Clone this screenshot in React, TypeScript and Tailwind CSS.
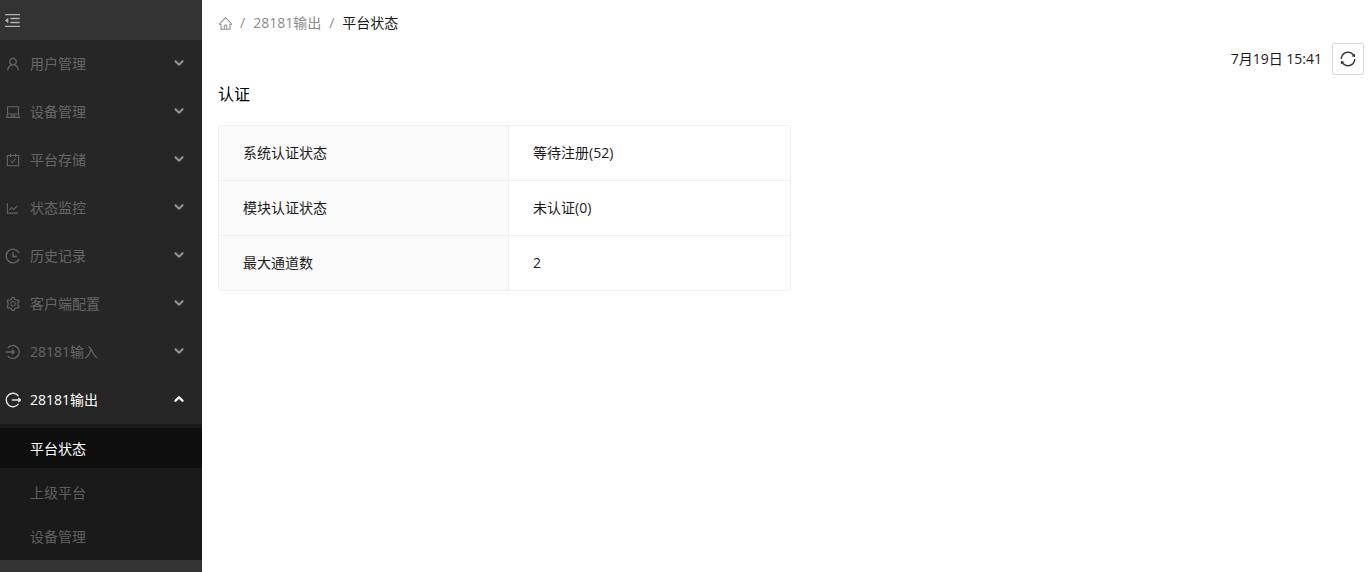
import React from "react";
import {
  AiOutlineCarryOut,
  AiOutlineHome,
  AiOutlineLaptop,
  AiOutlineLineChart,
  AiOutlineMenuFold,
  AiOutlineSetting,
  AiOutlineSync,
  AiOutlineUser,
} from "react-icons/ai";
import { ChevronDown, ChevronUp } from "lucide-react";

const FONT = "font-['Open_Sans','Noto_Sans_CJK_SC',sans-serif]";

const LoginIcon = () => (
  <svg viewBox="0 0 14 14" className="h-[16px] w-[16px]" fill="none" stroke="currentColor" strokeWidth="1.1">
    <path d="M2.2 3.6A5.7 5.7 0 1 1 2.2 10.4" />
    <path d="M0.6 7H8M6 5l2 2-2 2" />
  </svg>
);

const LogoutIcon = () => (
  <svg viewBox="0 0 14 14" className="h-[16px] w-[16px]" fill="none" stroke="currentColor" strokeWidth="1.3">
    <path d="M11.8 3.6A5.9 5.9 0 1 0 11.8 10.4" />
    <path d="M6 7H13.4M11.6 5.4l1.8 1.6-1.8 1.6" />
  </svg>
);

const HistoryIcon = () => (
  <svg viewBox="0 0 14 14" className="h-[16px] w-[16px]" fill="none" stroke="currentColor" strokeWidth="1.2">
    <path d="M12.4 4.4A6 6 0 1 0 12.4 9.6" />
    <path d="M7 3.6V7.4H10.4" />
  </svg>
);

const menu = [
  { label: "用户管理", icon: <AiOutlineUser size={16} /> },
  { label: "设备管理", icon: <AiOutlineLaptop size={16} /> },
  { label: "平台存储", icon: <AiOutlineCarryOut size={16} /> },
  { label: "状态监控", icon: <AiOutlineLineChart size={15} /> },
  { label: "历史记录", icon: <HistoryIcon /> },
  { label: "客户端配置", icon: <AiOutlineSetting size={16} /> },
  { label: "28181输入", icon: <LoginIcon /> },
];

const subMenu = [
  { label: "平台状态", active: true },
  { label: "上级平台", active: false },
  { label: "设备管理", active: false },
];

const rows = [
  { name: "系统认证状态", value: "等待注册(52)" },
  { name: "模块认证状态", value: "未认证(0)" },
  { name: "最大通道数", value: "2" },
];

const Sidebar = () => (
  <aside className="flex h-[572px] w-[202px] shrink-0 flex-col bg-[#333333] text-[14px]">
    <div className="flex h-10 shrink-0 items-center pl-[3px] text-[#b4b4b4]">
      <AiOutlineMenuFold size={19} />
    </div>
    <nav className="bg-[#262626]">
      {menu.map((item) => (
        <div key={item.label} className="flex h-12 items-center pl-[5px] pr-[16px] text-[#666666]">
          <span className="flex w-[25px] shrink-0 items-center">{item.icon}</span>
          <span className="flex-1 pb-[2px]">{item.label}</span>
          <ChevronDown size={14} strokeWidth={4} className="-mt-[2px] text-[#8c8c8c]" />
        </div>
      ))}
      <div className="flex h-12 items-center pl-[5px] pr-[16px] text-white">
        <span className="flex w-[25px] shrink-0 items-center text-[#e0e0e0]">
          <LogoutIcon />
        </span>
        <span className="flex-1 pb-[2px]">28181输出</span>
        <ChevronUp size={14} strokeWidth={4} className="-mt-[2px]" />
      </div>
    </nav>
    <div className="flex flex-col bg-[#1a1a1a] py-1">
      {subMenu.map((item) => (
        <div
          key={item.label}
          className={
            item.active
              ? "mb-1 flex h-10 items-center bg-[#0e0e0e] pl-[30px] text-white"
              : "mb-1 flex h-10 items-center pl-[30px] text-[#5f5f5f] last:mb-0"
          }
        >
          {item.label}
        </div>
      ))}
    </div>
  </aside>
);

export default function App() {
  return (
    <div className={`flex h-[572px] w-[1369px] overflow-hidden bg-white ${FONT} text-[14px] text-[#1a1a1a]`}>
      <Sidebar />
      <main className="flex-1 px-4">
        <div className="flex h-12 items-center text-[#8c8c8c]">
          <AiOutlineHome size={15} className="-mt-[1px]" />
          <div className="flex items-center pb-[3px]">
            <span className="ml-[7px] mr-2">/</span>
            <span>28181输出</span>
            <span className="ml-2 mr-[8px]">/</span>
            <span className="text-[#1a1a1a]">平台状态</span>
          </div>
        </div>
        <div className="-mr-[11px] -mt-[5px] flex h-[32px] items-center justify-end">
          <span className="mr-[10px] pb-[2px]">7月19日 15:41</span>
          <button className="flex h-[32px] w-[32px] items-center justify-center rounded-[2px] border border-[#d9d9d9] text-[#333333]">
            <AiOutlineSync size={18} />
          </button>
        </div>
        <h2 className="mt-[4px] flex h-[30px] items-center text-[16px] font-normal text-black">认证</h2>
        <div className="mt-[16px] w-[573px] rounded-[2px] border border-[#f0f0f0]">
          {rows.map((row) => (
            <div key={row.name} className="flex h-[55px] border-b border-[#f0f0f0] last:h-[54px] last:border-b-0">
              <div className="flex w-[290px] items-center border-r border-[#f0f0f0] bg-[#fafafa] pb-[2px] pl-6">{row.name}</div>
              <div className="flex flex-1 items-center pb-[2px] pl-6">{row.value}</div>
            </div>
          ))}
        </div>
      </main>
    </div>
  );
}
